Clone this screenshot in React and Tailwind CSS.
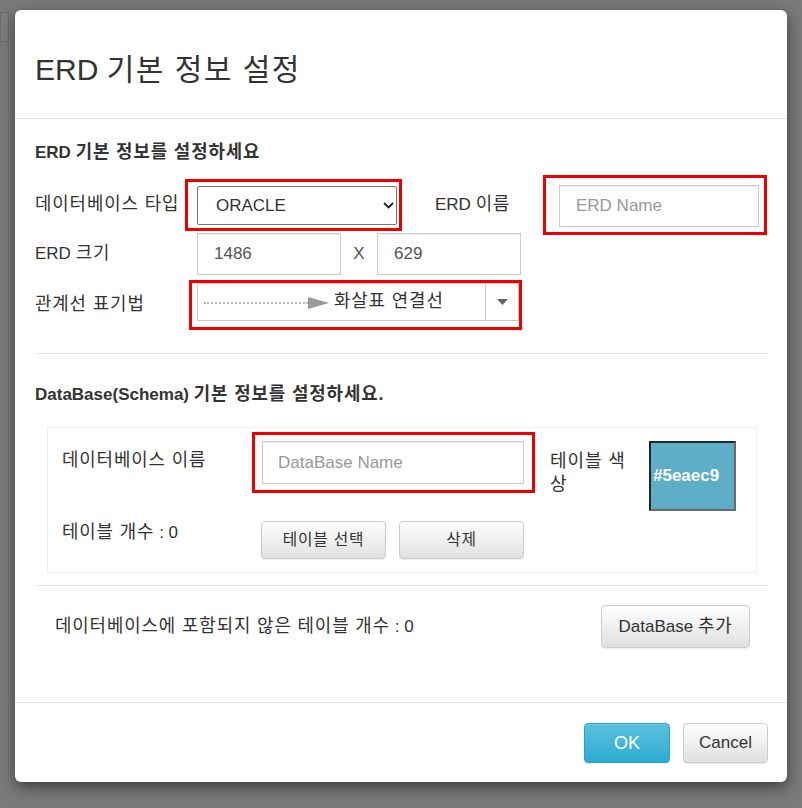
import React from "react";

const btn =
  "rounded-[4px] border border-[#ccc] bg-linear-to-b from-white to-[#e0e0e0] text-[#333] shadow-[inset_0_1px_0_rgba(255,255,255,0.15),0_1px_1px_rgba(0,0,0,0.075)]";

const input =
  "border border-[#ccc] bg-white pl-[16px] text-[17px] text-[#555] placeholder:text-[#999] outline-none shadow-[inset_0_1px_1px_rgba(0,0,0,0.075)]";

// hangul in the reference runs a bit larger/wider than Noto CJK
const K = ({ children }) => (
  <span className="text-[1.05em] leading-none tracking-[0.05em]">{children}</span>
);

const App = () => {
  return (
    <div className="relative h-[808px] w-[802px] overflow-hidden bg-[#7a7a7a] pl-[15px] pt-[10px] font-['Liberation_Sans','Noto_Sans_CJK_KR',sans-serif] text-[#333]">
      {/* page behind the backdrop */}
      <div className="absolute left-0 top-[12px] h-[30px] w-[9px] border border-[#6b6b6b] bg-[#7e7e7e]" />

      <div className="relative flex h-[772px] w-[772px] flex-col rounded-[6px] bg-white shadow-[0_5px_15px_rgba(0,0,0,0.5)]">
        {/* header */}
        <div className="h-[109px] border-b border-[#e5e5e5] pl-[20px] pt-[42px]">
          <h1 className="text-[30px] leading-[36px]">
            ERD <span className="tracking-[0.05em]">기본 정보 설정</span>
          </h1>
        </div>

        {/* body */}
        <div className="flex-1 px-[20px] pt-[22px]">
          <h2 className="h-[24px] text-[17px] font-bold leading-[24px]">
            ERD <K>기본 정보를 설정하세요</K>
          </h2>

          <div className="mt-[14px] flex h-[52px] items-center text-[17px]">
            <div className="w-[150px] shrink-0">
              <K>데이터베이스 타입</K>
            </div>
            <div className="h-[52px] w-[217px] shrink-0 border-[3px] border-[#e00] pl-[9px] pt-[4px]">
              <div className="relative h-[39px] w-[200px]">
                <select
                  defaultValue="ORACLE"
                  className="h-full w-full appearance-none rounded-[2px] border border-[#767676] bg-white pl-[18px] text-[17px] text-[#333] outline-none"
                >
                  <option>ORACLE</option>
                  <option>MYSQL</option>
                  <option>MSSQL</option>
                </select>
                <svg
                  className="pointer-events-none absolute right-[3px] top-[16px]"
                  width="11"
                  height="7"
                  viewBox="0 0 11 7"
                >
                  <path d="M1 1l4.5 4.5L10 1" fill="none" stroke="#222" strokeWidth="1.8" />
                </svg>
              </div>
            </div>
            <div className="ml-[33px] w-[108px] shrink-0">
              ERD <K>이름</K>
            </div>
            <div className="h-[60px] w-[224px] shrink-0 border-[3px] border-[#e00] pl-[13px] pt-[7px]">
              <input placeholder="ERD Name" className={`${input} h-[42px] w-[200px]`} />
            </div>
          </div>

          <div className="mt-[2px] flex h-[42px] items-center text-[17px]">
            <div className="w-[162px] shrink-0">
              ERD <K>크기</K>
            </div>
            <input defaultValue="1486" className={`${input} h-[42px] w-[144px]`} />
            <div className="w-[36px] text-center text-[#555]">X</div>
            <input defaultValue="629" className={`${input} h-[42px] w-[144px]`} />
          </div>

          <div className="mt-[5px] flex h-[50px] items-center text-[17px]">
            <div className="w-[154px] shrink-0">
              <K>관계선 표기법</K>
            </div>
            <div className="h-[50px] w-[333px] shrink-0 border-[3px] border-[#e00] pl-[5px]">
              <div className="flex h-[38px] w-[322px] border border-[#ccc] bg-white">
                <div className="flex flex-1 items-center pl-[6px]">
                  <div className="mt-[2px] w-[104px] border-t-2 border-dotted border-[#b5b5b5]" />
                  <svg width="21" height="12" viewBox="0 0 21 12" className="mt-[2px]">
                    <path d="M0 0L21 6L0 12Z" fill="#9a9a9a" />
                  </svg>
                  <span className="ml-[5px] leading-[24px]">
                    <K>화살표 연결선</K>
                  </span>
                </div>
                <div className="flex w-[33px] items-center justify-center border-l border-[#ccc]">
                  <svg width="11" height="6" viewBox="0 0 11 6">
                    <path d="M0 0H11L5.5 6Z" fill="#666" />
                  </svg>
                </div>
              </div>
            </div>
          </div>

          <div className="mt-[23px] border-t border-[#e5e5e5]" />

          <h2 className="mt-[29px] h-[24px] text-[17px] font-bold leading-[24px]">
            DataBase(Schema) <K>기본 정보를 설정하세요.</K>
          </h2>

          <div className="ml-[12px] mt-[20px] h-[146px] w-[710px] border border-[#eee] pl-[14px] pt-[4px] text-[17px]">
            <div className="flex items-start">
              <div className="mt-[17px] h-[24px] w-[190px] shrink-0 leading-[24px]">
                <K>데이터베이스 이름</K>
              </div>
              <div className="h-[61px] w-[283px] shrink-0 border-[3px] border-[#e00] pl-[7px] pt-[6px]">
                <input placeholder="DataBase Name" className={`${input} h-[43px] w-[262px] !pl-[15px]`} />
              </div>
              <div className="ml-[15px] mt-[18px] w-[84px] shrink-0 text-[18px] leading-[23px] tracking-[0.05em]">
                테이블 색상
              </div>
              <div className="ml-[15px] mt-[9px] flex h-[70px] w-[87px] shrink-0 items-center border-2 border-b-[#6b6b6b] border-l-[#1b2930] border-r-[#6b6b6b] border-t-[#1b2930] bg-[#5eaec9] pl-[2px] text-[17px] font-bold text-white">
                #5eaec9
              </div>
            </div>
            <div className="mt-[10px] flex items-start">
              <div className="h-[24px] w-[199px] shrink-0 leading-[24px]">
                <K>테이블 개수</K> : 0
              </div>
              <button className={`${btn} h-[38px] w-[125px] text-[15px]`}>
                <K>테이블 선택</K>
              </button>
              <button className={`${btn} ml-[13px] h-[38px] w-[125px] text-[15px]`}>
                <K>삭제</K>
              </button>
            </div>
          </div>

          <div className="mt-[12px] border-t border-[#e5e5e5]" />

          <div className="mt-[19px] flex h-[43px] items-center justify-between pl-[20px] pr-[17px] text-[17px]">
            <span className="leading-[24px]">
              <K>데이터베이스에 포함되지 않은 테이블 개수</K> : 0
            </span>
            <button className={`${btn} h-[43px] w-[149px] text-[17px]`}>
              DataBase <K>추가</K>
            </button>
          </div>
        </div>

        {/* footer */}
        <div className="flex h-[80px] justify-end gap-[13px] border-t border-[#e5e5e5] pr-[19px] pt-[20px]">
          <button className="h-[40px] w-[86px] rounded-[4px] border border-[#28a4c9] bg-linear-to-b from-[#5bc0de] to-[#2aabd2] text-[18px] text-white shadow-[inset_0_1px_0_rgba(255,255,255,0.15),0_1px_1px_rgba(0,0,0,0.075)]">
            OK
          </button>
          <button className={`${btn} h-[40px] w-[85px] text-[17px]`}>Cancel</button>
        </div>
      </div>
    </div>
  );
};

export default App;
